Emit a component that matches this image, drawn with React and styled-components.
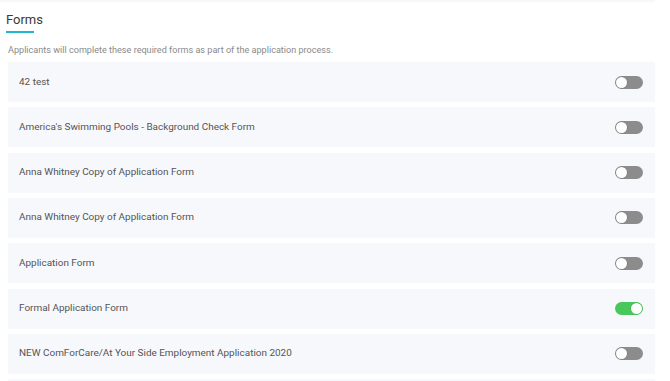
import React from "react";
import styled, { createGlobalStyle } from "styled-components";

const Global = createGlobalStyle`
  html, body { margin: 0; padding: 0; background: #ffffff; }
  body { font-family: Roboto, "Liberation Sans", Arial, sans-serif; }
`;

const Page = styled.div`
  width: 670px;
  height: 381px;
  overflow: hidden;
  background: #fff;
`;

const TopStrip = styled.div`
  height: 2px;
  margin: 0 15px 0 0;
  background: #f7f8fc;
`;

const Section = styled.section`
  padding: 8px 15px 0 8px;
`;

const Title = styled.h2`
  margin: 0 0 0 -2px;
  font-size: 13px;
  font-weight: 400;
  color: #3a3a3a;
  line-height: 19px;
`;

const Underline = styled.div`
  width: 28px;
  height: 2px;
  margin: 2px 0 0 -2px;
  background: #22b8cc;
`;

const Subtitle = styled.p`
  margin: 11px 0 0 0;
  font-size: 9.1px;
  color: #8a8a8a;
  line-height: 12px;
`;

const List = styled.div`
  margin-top: 6px;
  display: flex;
  flex-direction: column;
  gap: 5.33px;
`;

const Row = styled.div`
  height: 40px;
  background: #f7f8fc;
  display: flex;
  align-items: center;
  justify-content: space-between;
  padding: 0 12px 0 11px;
`;

const Label = styled.span`
  font-size: 9.95px;
  color: #545454;
  margin-top: -2px;
`;

const Track = styled.div`
  width: 28px;
  height: 13px;
  border-radius: 7px;
  background: ${(p) => (p.$on ? "#48c85a" : "#8c8c8c")};
  position: relative;
`;

const Knob = styled.div`
  position: absolute;
  top: 1px;
  left: ${(p) => (p.$on ? "16px" : "1px")};
  width: 11px;
  height: 11px;
  border-radius: 50%;
  background: #fff;
  box-shadow: 0 0 0 0.5px rgba(0, 0, 0, 0.15);
`;

const Toggle = ({ on }) => (
  <Track $on={on}>
    <Knob $on={on} />
  </Track>
);

const forms = [
  { name: "42 test", on: false },
  { name: "America's Swimming Pools - Background Check Form", on: false },
  { name: "Anna Whitney Copy of Application Form", on: false },
  { name: "Anna Whitney Copy of Application Form", on: false },
  { name: "Application Form", on: false },
  { name: "Formal Application Form", on: true },
  { name: "NEW ComForCare/At Your Side Employment Application 2020", on: false },
  { name: "", on: false },
];

export default function App() {
  return (
    <Page>
      <Global />
      <TopStrip />
      <Section>
        <Title>Forms</Title>
        <Underline />
        <Subtitle>
          Applicants will complete these required forms as part of the application process.
        </Subtitle>
        <List>
          {forms.map((f, i) => (
            <Row key={i}>
              <Label>{f.name}</Label>
              {f.name && <Toggle on={f.on} />}
            </Row>
          ))}
        </List>
      </Section>
    </Page>
  );
}
